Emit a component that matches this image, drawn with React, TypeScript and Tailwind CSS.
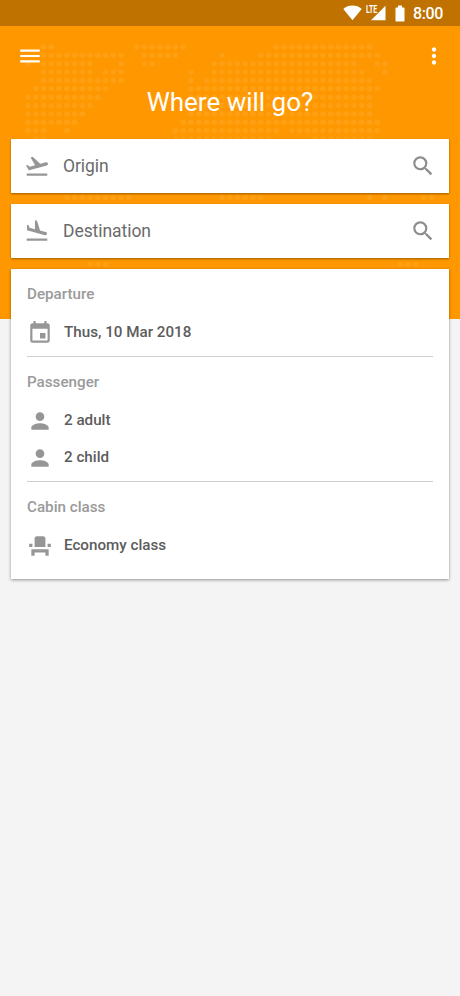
import type { ReactNode } from "react"
import {
  MdEvent,
  MdEventSeat,
  MdFlightLand,
  MdFlightTakeoff,
  MdMenu,
  MdMoreVert,
  MdPerson,
  MdSearch,
} from "react-icons/md"

// world map dots: [row, first column, last column]
const mapRuns: [number, number, number][] = [
  [0, 2, 3], [0, 14, 20], [0, 32, 44],
  [1, 2, 12], [1, 15, 19], [1, 25, 25], [1, 30, 45],
  [2, 0, 0], [2, 2, 8], [2, 12, 12], [2, 15, 16], [2, 24, 42], [2, 45, 46],
  [3, 2, 8], [3, 10, 12], [3, 21, 21], [3, 24, 43], [3, 46, 46],
  [4, 2, 12], [4, 21, 21], [4, 23, 44],
  [5, 1, 10], [5, 21, 45],
  [6, 0, 9], [6, 21, 44],
  [7, 0, 8], [7, 21, 44],
  [8, 0, 7], [8, 21, 44],
  [9, 0, 6], [9, 20, 45],
  [10, 0, 2], [10, 5, 5], [10, 19, 32], [10, 34, 45],
  [11, 1, 2], [11, 19, 31], [11, 37, 44],
  [18, 5, 13], [18, 25, 30], [18, 44, 44], [18, 46, 46], [18, 51, 52],
  [26, 8, 10], [26, 48, 50],
]

function WorldMap() {
  return (
    <svg className="block w-full h-full" viewBox="0 0 460 319" fill="#fff" fillOpacity="0.08">
      {mapRuns.map(([row, from, to]) =>
        Array.from({ length: to - from + 1 }, (_, i) => (
          <circle key={`${row}-${from + i}`} cx={28 + (from + i) * 7.76} cy={47 + row * 8.36} r="2.7" />
        ))
      )}
    </svg>
  )
}

function StatusBar() {
  return (
    <div className="flex items-center justify-end h-[26px] pr-[17px] bg-[#bf7200] text-white">
      <svg className="w-[19px] h-4" viewBox="0 0 19 16" fill="currentColor">
        <path d="M9.5 15.3 0.3 3.9C2.8 1.8 6 .6 9.5 .6s6.7 1.2 9.2 3.3z" />
      </svg>
      <div className="relative ml-[4px] w-5 h-4">
        <span className="absolute left-0 top-0 origin-left scale-x-[0.7] text-[10px] leading-[10px] font-bold">LTE</span>
        <svg className="w-full h-full" viewBox="0 0 20 16" fill="currentColor">
          <path d="M5 15.3 19.5 .8v14.5z" />
        </svg>
      </div>
      <svg className="ml-[9px] w-[10px] h-[17px]" viewBox="0 0 10 17" fill="currentColor">
        <path d="M3 .5h4v2h1.7c.5 0 .8.3.8.8v12.4c0 .5-.3.8-.8.8H1.3c-.5 0-.8-.3-.8-.8V3.3c0-.5.3-.8.8-.8H3z" />
      </svg>
      <span className="ml-2 pt-px w-[30px] text-[16px] leading-6 font-medium tracking-[-0.4px]">8:00</span>
    </div>
  )
}

function SearchField({ icon, label }: { icon: ReactNode; label: string }) {
  return (
    <div className="flex items-center h-[54px] px-[13px] bg-white shadow-[0_1px_2px_rgba(0,0,0,0.4)]">
      <span className="flex text-[#969696]">{icon}</span>
      <span className="flex-1 ml-[13px] text-[17.5px] tracking-[-0.06px] text-[#6b6b6b]">{label}</span>
      <MdSearch size={26} className="text-[#8c8c8c]" />
    </div>
  )
}

function Item({ icon, label }: { icon: ReactNode; label: string }) {
  return (
    <div className="flex items-center h-[37px]">
      <span className="flex text-[#969696]">{icon}</span>
      <span className="ml-[11px] text-[15.2px] font-medium text-[#5c5c5c]">{label}</span>
    </div>
  )
}

function Section({ title, children }: { title: string; children: ReactNode }) {
  return (
    <section>
      <h2 className="h-[45px] pt-[13px] text-[15.2px] leading-6 font-medium text-[#9a9a9a]">{title}</h2>
      {children}
    </section>
  )
}

export default function App() {
  return (
    <div className="relative min-h-screen bg-[#f4f4f4] font-[Roboto,sans-serif]">
      <div className="absolute inset-x-0 top-0 h-[319px] bg-[#ff9800]">
        <WorldMap />
      </div>
      <div className="relative">
        <StatusBar />
        <header className="text-white">
          <div className="flex items-center justify-between h-[60px] pl-[17px] pr-[13px]">
            <MdMenu size={26} />
            <MdMoreVert size={26} />
          </div>
          <h1 className="h-[53px] text-center text-[26px] leading-8">Where will go?</h1>
        </header>
        <main className="flex flex-col gap-[11px] px-[11px]">
          <SearchField icon={<MdFlightTakeoff size={26} />} label="Origin" />
          <SearchField icon={<MdFlightLand size={26} />} label="Destination" />
          <div className="h-[310px] px-4 bg-white shadow-[0_1px_3px_rgba(0,0,0,0.4)]">
            <Section title="Departure">
              <Item icon={<MdEvent size={26} />} label="Thus, 10 Mar 2018" />
            </Section>
            <hr className="mt-[5px] border-[#cfcfcf]" />
            <Section title="Passenger">
              <Item icon={<MdPerson size={26} />} label="2 adult" />
              <Item icon={<MdPerson size={26} />} label="2 child" />
            </Section>
            <hr className="mt-[5px] border-[#cfcfcf]" />
            <Section title="Cabin class">
              <Item icon={<MdEventSeat size={26} />} label="Economy class" />
            </Section>
          </div>
        </main>
      </div>
    </div>
  )
}
